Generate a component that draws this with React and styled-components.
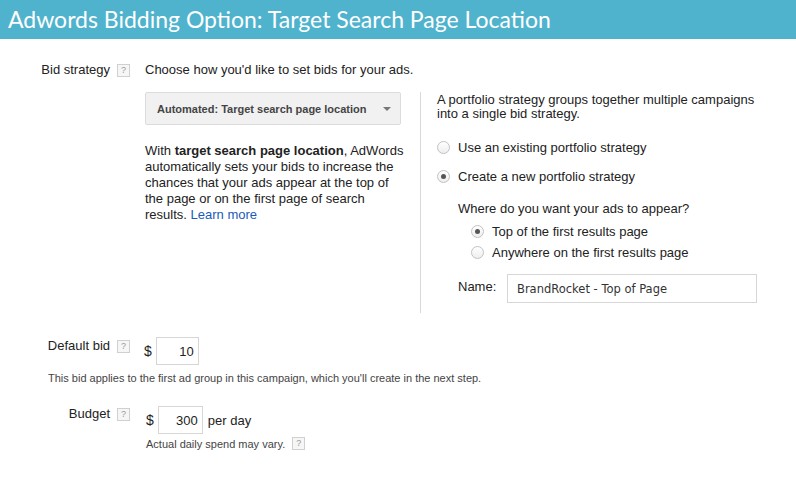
import React from "react";
import styled, { createGlobalStyle } from "styled-components";

const Global = createGlobalStyle`
  html, body {
    margin: 0;
    padding: 0;
    background: #fff;
  }
  body {
    font-family: "Liberation Sans", Arial, sans-serif;
    font-size: 13px;
    color: #222;
  }
`;

const Page = styled.div`
  width: 796px;
  height: 500px;
  overflow: hidden;
`;

const Header = styled.div`
  height: 39px;
  background: #50b3cd;
  color: #fff;
  font-family: Lato, "Open Sans", sans-serif;
  font-size: 23px;
  line-height: 39px;
  padding-left: 8px;
`;

const Form = styled.div`
  padding-top: 23px;
`;

const Row = styled.div`
  display: flex;
  align-items: flex-start;
  margin-top: ${(p) => p.$top || 0}px;
`;

const LabelCell = styled.div`
  width: 130px;
  flex-shrink: 0;
  display: flex;
  justify-content: flex-end;
  align-items: center;
  gap: 7px;
  line-height: 16px;
  padding-top: ${(p) => p.$pad || 0}px;
`;

const Help = styled.span`
  display: inline-flex;
  align-items: center;
  justify-content: center;
  box-sizing: border-box;
  width: 13px;
  height: 13px;
  border: 1px solid #d0d0d0;
  background: #f6f6f6;
  color: #999;
  font-size: 9px;
  line-height: 1;
`;

const Content = styled.div`
  margin-left: ${(p) => p.$ml || 15}px;
`;

const Line = styled.div`
  line-height: 16px;
`;

const Columns = styled.div`
  display: flex;
  margin-top: 14px;
`;

const LeftCol = styled.div`
  width: 264px;
  margin-right: 11px;
`;

const Dropdown = styled.div`
  box-sizing: border-box;
  width: 256px;
  height: 33px;
  background: #f1f1f1;
  border: 1px solid #dcdcdc;
  border-radius: 2px;
  display: flex;
  align-items: center;
  padding-left: 11px;
  font-size: 11px;
  font-weight: bold;
  color: #444;
`;

const Caret = styled.span`
  margin-left: 17px;
  width: 0;
  height: 0;
  border-left: 4px solid transparent;
  border-right: 4px solid transparent;
  border-top: 4px solid #777;
`;

const Para = styled.p`
  margin: 18px 0 0;
  line-height: 16px;
`;

const Link = styled.a`
  color: #1a5bb8;
  text-decoration: none;
`;

const RightCol = styled.div`
  border-left: 1px solid #d9d9d9;
  padding-left: 16px;
  padding-bottom: 10px;
  width: 320px;
`;

const Intro = styled.div`
  line-height: 14px;
  padding-top: 1px;
`;

const RadioRow = styled.label`
  display: flex;
  align-items: center;
  gap: 8px;
  height: 20px;
  margin-top: ${(p) => p.$top || 0}px;
  margin-left: ${(p) => p.$indent || 0}px;
`;

const Radio = styled.span`
  position: relative;
  box-sizing: border-box;
  width: 13px;
  height: 13px;
  border-radius: 50%;
  border: 1px solid #c2c2c2;
  background: linear-gradient(#fff, #eee);
  flex-shrink: 0;
  &::after {
    content: "";
    display: ${(p) => (p.$checked ? "block" : "none")};
    position: absolute;
    left: 3px;
    top: 3px;
    width: 5px;
    height: 5px;
    border-radius: 50%;
    background: #555;
  }
`;

const SubBlock = styled.div`
  margin-left: 21px;
`;

const Question = styled.div`
  margin-top: 15px;
  line-height: 16px;
`;

const NameRow = styled.div`
  display: flex;
  align-items: center;
  margin-top: 12px;
`;

const NameLabel = styled.span`
  width: 49px;
  padding-bottom: 4px;
`;

const NameInput = styled.div`
  box-sizing: border-box;
  width: 250px;
  height: 29px;
  border: 1px solid #d6d6d6;
  display: flex;
  align-items: center;
  padding-left: 9px;
  font-family: "DejaVu Sans", Verdana, sans-serif;
  font-size: 11.5px;
  color: #333;
`;

const Money = styled.div`
  display: flex;
  align-items: center;
  gap: 4px;
`;

const Dollar = styled.span`
  font-size: 14px;
`;

const Amount = styled.div`
  box-sizing: border-box;
  width: ${(p) => p.$w}px;
  height: 28px;
  border: 1px solid #d6d6d6;
  display: flex;
  align-items: center;
  justify-content: flex-end;
  padding-right: 4px;
  font-size: 13px;
`;

const Suffix = styled.span`
  margin-left: 1px;
`;

const Note = styled.div`
  font-size: 11px;
  color: #444;
  margin-top: ${(p) => p.$top || 0}px;
  margin-left: ${(p) => p.$ml || 0}px;
  display: flex;
  align-items: center;
  gap: 7px;
`;

export default function App() {
  return (
    <Page>
      <Global />
      <Header>Adwords Bidding Option: Target Search Page Location</Header>
      <Form>
        <Row>
          <LabelCell>
            Bid strategy <Help>?</Help>
          </LabelCell>
          <Content>
            <Line>Choose how you'd like to set bids for your ads.</Line>
            <Columns>
              <LeftCol>
                <Dropdown>
                  Automated: Target search page location
                  <Caret />
                </Dropdown>
                <Para>
                  With <b>target search page location</b>, AdWords
                  automatically sets your bids to increase the chances that
                  your ads appear at the top of the page or on the first page
                  of search results. <Link href="#">Learn more</Link>
                </Para>
              </LeftCol>
              <RightCol>
                <Intro>
                  A portfolio strategy groups together multiple campaigns
                  <br />
                  into a single bid strategy.
                </Intro>
                <RadioRow $top={16}>
                  <Radio /> Use an existing portfolio strategy
                </RadioRow>
                <RadioRow $top={9}>
                  <Radio $checked /> Create a new portfolio strategy
                </RadioRow>
                <SubBlock>
                  <Question>Where do you want your ads to appear?</Question>
                  <RadioRow $top={4} $indent={13}>
                    <Radio $checked /> Top of the first results page
                  </RadioRow>
                  <RadioRow $top={1} $indent={13}>
                    <Radio /> Anywhere on the first results page
                  </RadioRow>
                  <NameRow>
                    <NameLabel>Name:</NameLabel>
                    <NameInput>BrandRocket - Top of Page</NameInput>
                  </NameRow>
                </SubBlock>
              </RightCol>
            </Columns>
          </Content>
        </Row>

        <Row $top={24}>
          <LabelCell $pad={1}>
            Default bid <Help>?</Help>
          </LabelCell>
          <Content $ml={14}>
            <Money>
              <Dollar>$</Dollar>
              <Amount $w={43}>10</Amount>
            </Money>
          </Content>
        </Row>
        <Note $top={7} $ml={48}>
          This bid applies to the first ad group in this campaign, which
          you'll create in the next step.
        </Note>

        <Row $top={22}>
          <LabelCell>
            Budget <Help>?</Help>
          </LabelCell>
          <Content $ml={16}>
            <Money>
              <Dollar>$</Dollar>
              <Amount $w={45}>300</Amount>
              <Suffix>per day</Suffix>
            </Money>
            <Note $top={3}>
              Actual daily spend may vary. <Help>?</Help>
            </Note>
          </Content>
        </Row>
      </Form>
    </Page>
  );
}
